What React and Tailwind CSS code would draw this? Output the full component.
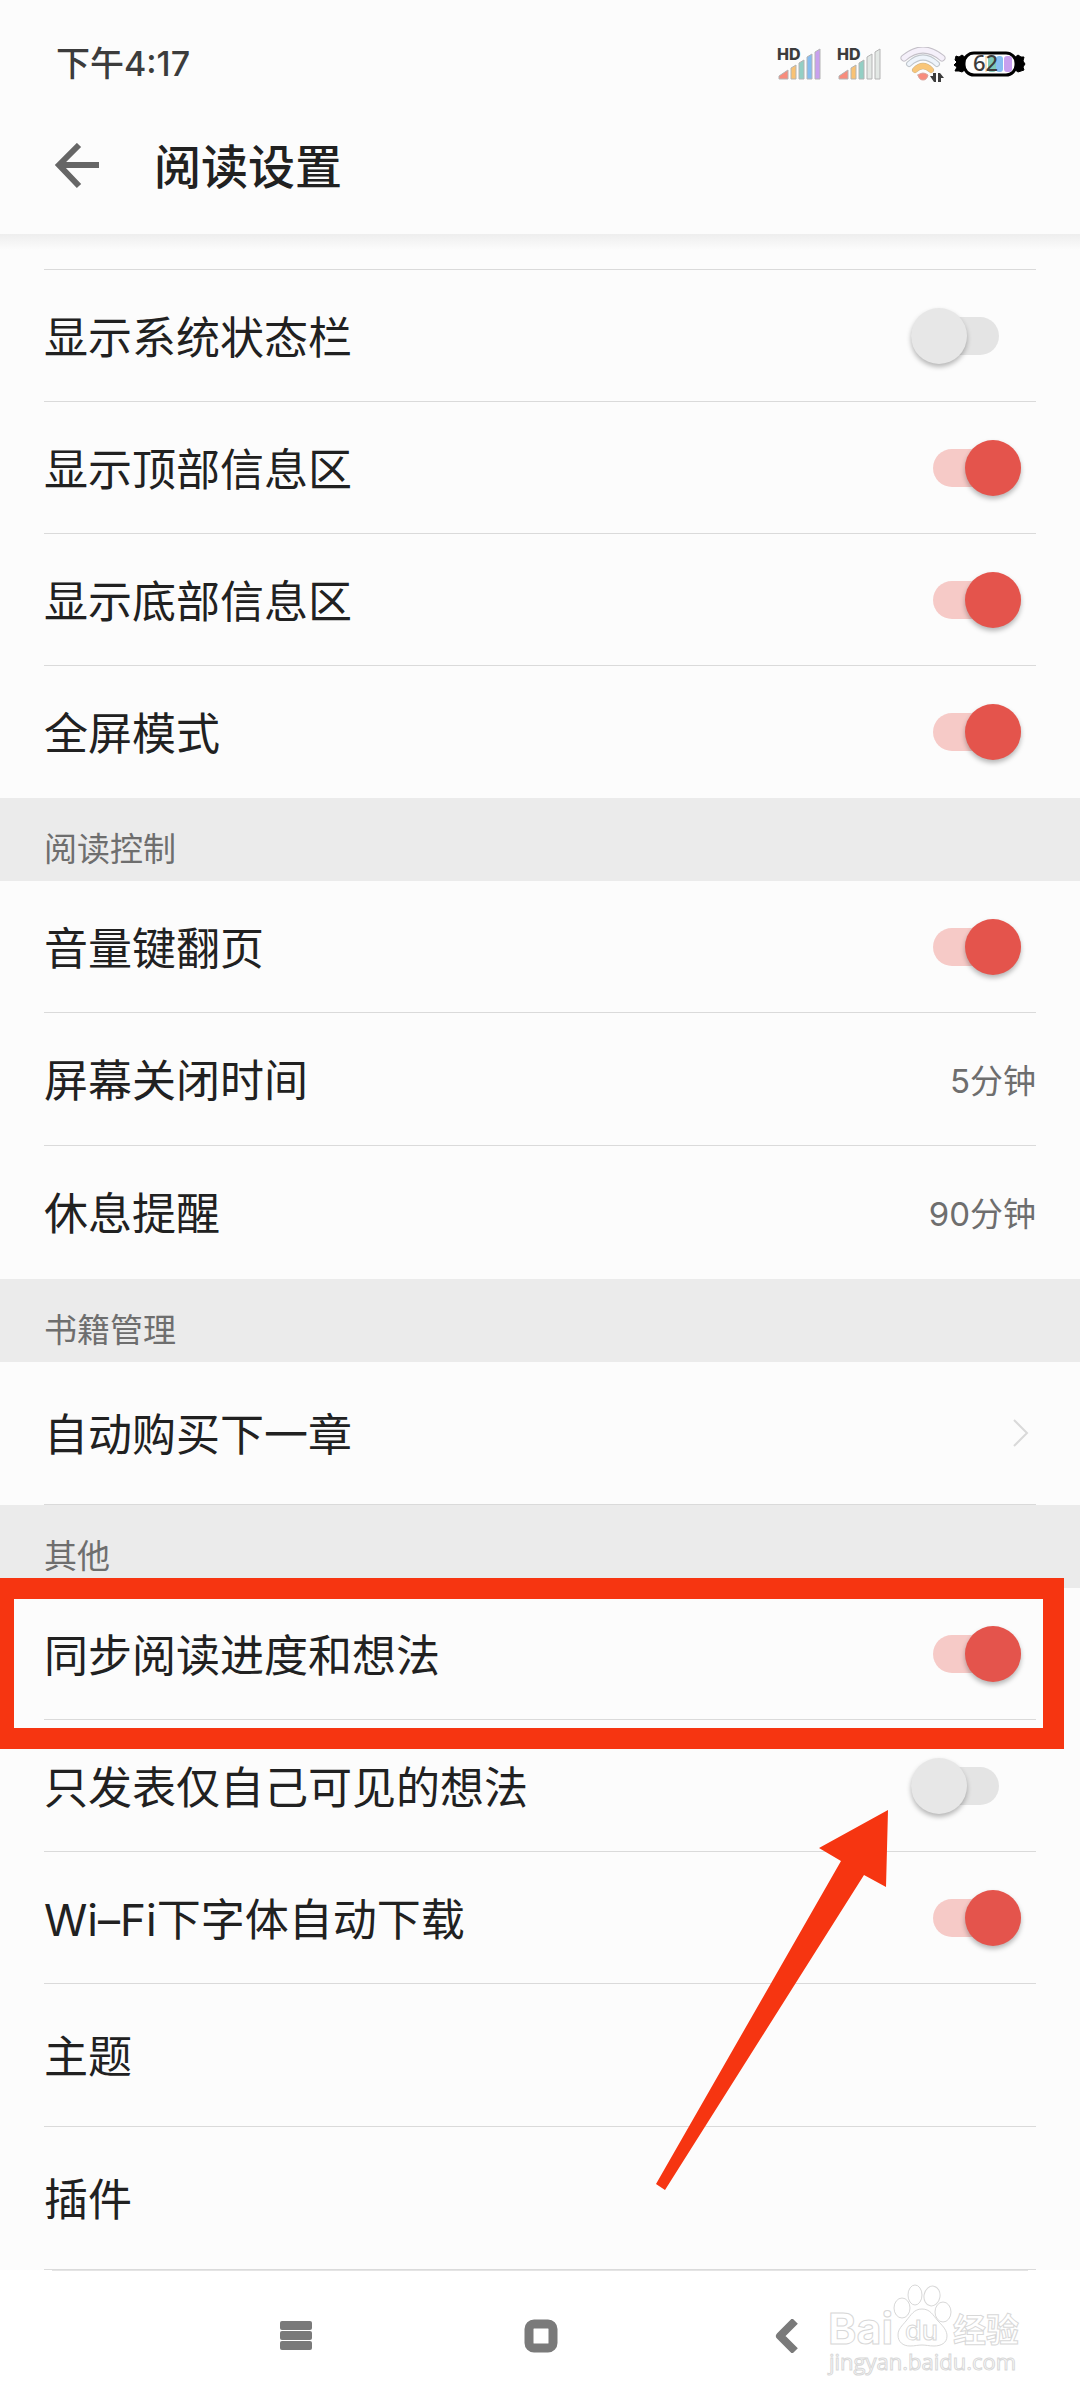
import { useState } from 'react'
import clsx from 'clsx'

const BARS = [
  { d: 'M1 31 V28 L10 22 V31 Z', color: '#f88c7c' },
  { d: 'M13 31 V20 L18 17 V31 Z', color: '#f9c274' },
  { d: 'M21 31 V15 L26 12 V31 Z', color: '#93cfc4' },
  { d: 'M29 31 V9 L34 6 V31 Z', color: '#86bdf0' },
  { d: 'M37 31 V4 L42 1 V31 Z', color: '#c8a0ee' },
]

const SECTIONS = [
  {
    rows: [
      { label: '显示系统状态栏', type: 'switch', on: false },
      { label: '显示顶部信息区', type: 'switch', on: true },
      { label: '显示底部信息区', type: 'switch', on: true },
      { label: '全屏模式', type: 'switch', on: true },
    ],
  },
  {
    title: '阅读控制',
    rows: [
      { label: '音量键翻页', type: 'switch', on: true },
      { label: '屏幕关闭时间', type: 'value', value: '5分钟' },
      { label: '休息提醒', type: 'value', value: '90分钟' },
    ],
  },
  {
    title: '书籍管理',
    rows: [{ label: '自动购买下一章', type: 'link', chevron: true, line: true }],
  },
  {
    title: '其他',
    rows: [
      { label: '同步阅读进度和想法', type: 'switch', on: true, framed: true },
      { label: '只发表仅自己可见的想法', type: 'switch', on: false, arrow: true },
      { label: 'Wi–Fi下字体自动下载', type: 'switch', on: true },
      { label: '主题', type: 'link' },
      { label: '插件', type: 'link', line: true },
    ],
  },
]

function Signal({ level }) {
  return (
    <svg className="w-11 h-[33px] overflow-visible" viewBox="0 0 44 33" aria-hidden="true">
      {BARS.map((bar, i) => (
        <path key={bar.d} d={bar.d} fill={i < level ? bar.color : '#e3e8e5'}
          stroke="#b4b4b4" strokeWidth="1" strokeLinejoin="round" />
      ))}
      <text x="-1" y="12" fontSize="16" fontWeight="800" fill="#3c3c3c">HD</text>
    </svg>
  )
}

function Wifi() {
  return (
    <svg className="w-[46px] h-[35px]" viewBox="0 0 46 35" fill="none" strokeLinecap="round" aria-hidden="true">
      <path d="M4 11 Q23 -5 42 11" stroke="#c4c0c8" strokeWidth="7" />
      <path d="M4 11 Q23 -5 42 11" stroke="#f5f0fa" strokeWidth="5" />
      <path d="M9 17 Q23 4 37 17" stroke="#c0c6cc" strokeWidth="6" />
      <path d="M9 17 Q23 4 37 17" stroke="#eef4fb" strokeWidth="4" />
      <path d="M15 23 Q23 15 31 23" stroke="#c9b48e" strokeWidth="6" />
      <path d="M15 23 Q23 15 31 23" stroke="#f9c678" strokeWidth="5" />
      <path d="M18 28 Q23 24 28 28 Q27 33 23 33 Q19 33 18 28 Z" fill="#f88c7c" stroke="#d9a49c" />
      <path d="M30 29 H33 V26 H36 V35 H34 Z M38 35 V26 H40 L44 31 H41 V35 Z" fill="#3c3c3c" />
    </svg>
  )
}

function Battery() {
  return (
    <svg className="w-[72px] h-[26px]" viewBox="0 0 72 26" aria-hidden="true">
      <path d="M12 7 L8 4 L5 6 L2 5 L1 9 L3 11 L0 14 L3 16 L1 20 L5 20 L8 21 L12 18 Z" fill="#000" stroke="#000" strokeLinejoin="round" />
      <path d="M60 7 L64 4 L67 6 L70 6 L69 10 L71 13 L69 16 L70 19 L67 20 L64 21 L60 18 Z" fill="#000" stroke="#000" strokeLinejoin="round" />
      <rect x="10" y="2" width="52" height="22" rx="10" fill="#fff" stroke="#000" strokeWidth="3" />
      <rect x="31" y="5" width="2" height="16" fill="#fbe3bf" />
      <rect x="34" y="5" width="8" height="16" rx="3" fill="#7fc9b8" />
      <rect x="42" y="5" width="7" height="16" rx="3" fill="#86bdf0" />
      <rect x="50" y="5" width="8" height="16" rx="3" fill="#c8a0ee" />
      <text x="19" y="20" fontSize="22" fontWeight="500" fill="#3c3c3c" className="font-['Noto_Sans',sans-serif]">62</text>
    </svg>
  )
}

function StatusBar() {
  return (
    <div className="flex items-center justify-between h-[98px] pt-[30px] pl-14 pr-[54px]">
      <span className="text-[34px] leading-none font-medium text-[#3c3c3c]">下午4:17</span>
      <div className="flex items-center">
        <Signal level={5} />
        <span className="w-4" />
        <Signal level={3} />
        <span className="w-[18px]" />
        <Wifi />
        <span className="w-2" />
        <Battery />
      </div>
    </div>
  )
}

function Toggle({ checked, onChange }) {
  return (
    <input
      type="checkbox"
      role="switch"
      checked={checked}
      onChange={onChange}
      className="appearance-none grid grid-cols-1 items-center shrink-0 w-[88px] h-14 mr-[37px] checked:mr-[15px] cursor-pointer
        before:content-[''] before:col-start-1 before:row-start-1 before:h-[38px] before:rounded-full before:bg-[#e4e4e4] checked:before:bg-[#f6cac7]
        after:content-[''] after:col-start-1 after:row-start-1 after:size-14 after:rounded-full after:bg-[#e7e7e7] after:shadow-[0_3px_5px_rgba(0,0,0,0.28)] checked:after:bg-[#e4544c] checked:after:justify-self-end"
    />
  )
}

function PointerArrow() {
  return (
    <svg className="absolute z-10 top-[90px] right-48 w-[232px] h-[380px] pointer-events-none" viewBox="0 0 232 380" aria-hidden="true">
      <path d="M232 0 L163 38 L185 51 L0 374 L9 380 L208 65 L230 77 Z" fill="#f63511" />
    </svg>
  )
}

function Row({ row, divider }) {
  const [on, setOn] = useState(row.on ?? false)
  const Tag = row.type === 'switch' ? 'label' : 'button'

  return (
    <li className="relative px-11">
      <Tag
        className={clsx(
          'flex items-center justify-between w-full text-left border-b',
          row.type === 'switch' && 'h-[132px]',
          row.type === 'value' && 'h-[133px]',
          row.type === 'link' && 'h-[143px]',
          divider ? 'border-[#dadada]' : 'border-transparent'
        )}
      >
        <span className="pt-1 text-[44px] leading-none text-[#212121]">{row.label}</span>
        {row.type === 'switch' && <Toggle checked={on} onChange={e => setOn(e.target.checked)} />}
        {row.type === 'value' && <span className="pt-1 text-[33px] leading-none text-[#6e6e6e]">{row.value}</span>}
        {row.chevron && (
          <svg className="w-4 h-7 mr-[7px]" viewBox="0 0 16 28" fill="none" stroke="#d9d9d9" strokeWidth="2" aria-hidden="true">
            <path d="M1 1 L14 14 L1 27" />
          </svg>
        )}
      </Tag>
      {row.framed && (
        <div className="absolute z-10 left-0 right-4 -top-[10px] -bottom-[29px] border-[21px] border-l-[14px] border-[#f63511] pointer-events-none" />
      )}
      {row.arrow && <PointerArrow />}
    </li>
  )
}

function Section({ section }) {
  return (
    <section>
      {section.title && (
        <h2 className="flex items-center h-[83px] pt-5 px-11 bg-[#ebebeb] text-[33px] leading-none text-[#6e6e6e]">
          {section.title}
        </h2>
      )}
      <ul>
        {section.rows.map((row, i) => (
          <Row key={row.label} row={row} divider={row.line || i < section.rows.length - 1} />
        ))}
      </ul>
    </section>
  )
}

function Watermark() {
  return (
    <svg className="absolute top-1 right-[50px] w-[210px] h-[115px] pointer-events-none" viewBox="0 0 210 115"
      fill="#fff" stroke="#d8d8d8" strokeWidth="1" aria-hidden="true">
      <ellipse cx="82" cy="33" rx="8" ry="10" />
      <ellipse cx="95" cy="20" rx="7" ry="10" />
      <ellipse cx="112" cy="21" rx="8" ry="10" transform="rotate(10 112 21)" />
      <ellipse cx="123" cy="37" rx="8" ry="10" />
      <path d="M102 34 C110 34 113 40 118 46 C124 52 127 56 127 61 C127 68 121 71 114 71 C109 71 106 70 102 70 C98 70 95 71 90 71 C83 71 78 67 78 60 C78 54 82 51 86 46 C91 40 94 34 102 34 Z" />
      <text x="8" y="69" fontSize="43" fontWeight="700">Bai</text>
      <text x="85" y="65" fontSize="27" fontWeight="500">du</text>
      <text x="133" y="67" fontSize="33" fontWeight="700">经验</text>
      <text x="9" y="95" fontSize="22" fontWeight="400" className="font-['Open_Sans',sans-serif]">jingyan.baidu.com</text>
    </svg>
  )
}

function NavBar() {
  return (
    <div className="bg-white">
      <div className="h-px mx-[52px] bg-[#e4e4e4]" />
      <nav className="relative flex items-center justify-center gap-[189px] h-[129px] pl-0.5">
        <button aria-label="菜单" className="flex justify-center w-14">
          <svg className="w-8 h-[30px]" viewBox="0 0 32 30" fill="#7a7a7a">
            <rect width="32" height="9" rx="2" />
            <rect y="10" width="32" height="9" rx="2" />
            <rect y="20" width="32" height="9" rx="2" />
          </svg>
        </button>
        <button aria-label="主页" className="flex justify-center w-14">
          <svg className="size-[34px]" viewBox="0 0 34 34" fill="none" stroke="#7a7a7a" strokeWidth="9">
            <rect x="5" y="5" width="24" height="24" rx="5" />
          </svg>
        </button>
        <button aria-label="返回" className="flex justify-center w-14">
          <svg className="w-6 h-[34px]" viewBox="0 0 24 34" fill="none" stroke="#7a7a7a" strokeWidth="8">
            <path d="M21 2 L6 17 L21 32" strokeLinejoin="round" />
          </svg>
        </button>
        <Watermark />
      </nav>
    </div>
  )
}

export default function App() {
  return (
    <div className="flex flex-col min-h-screen bg-[#fcfcfc] font-['Inter','Noto_Sans_CJK_SC',sans-serif]">
      <header>
        <StatusBar />
        <div className="flex items-center h-[136px] pl-[54px]">
          <button aria-label="返回">
            <svg className="w-12 h-[46px]" viewBox="0 0 48 46" fill="none" stroke="#666" strokeWidth="6">
              <path d="M25 2 L5 22 L25 43 M5 22 H45" />
            </svg>
          </button>
          <h1 className="ml-[52px] text-[47px] leading-none font-medium text-[#212121]">阅读设置</h1>
        </div>
      </header>

      <main className="flex-1">
        <div className="h-4 bg-linear-to-b from-[#eeeeee] to-[#fcfcfc]" />
        <div className="h-5 mx-11 border-b border-[#dadada]" />
        {SECTIONS.map((section, i) => (
          <Section key={i} section={section} />
        ))}
      </main>

      <NavBar />
    </div>
  )
}
